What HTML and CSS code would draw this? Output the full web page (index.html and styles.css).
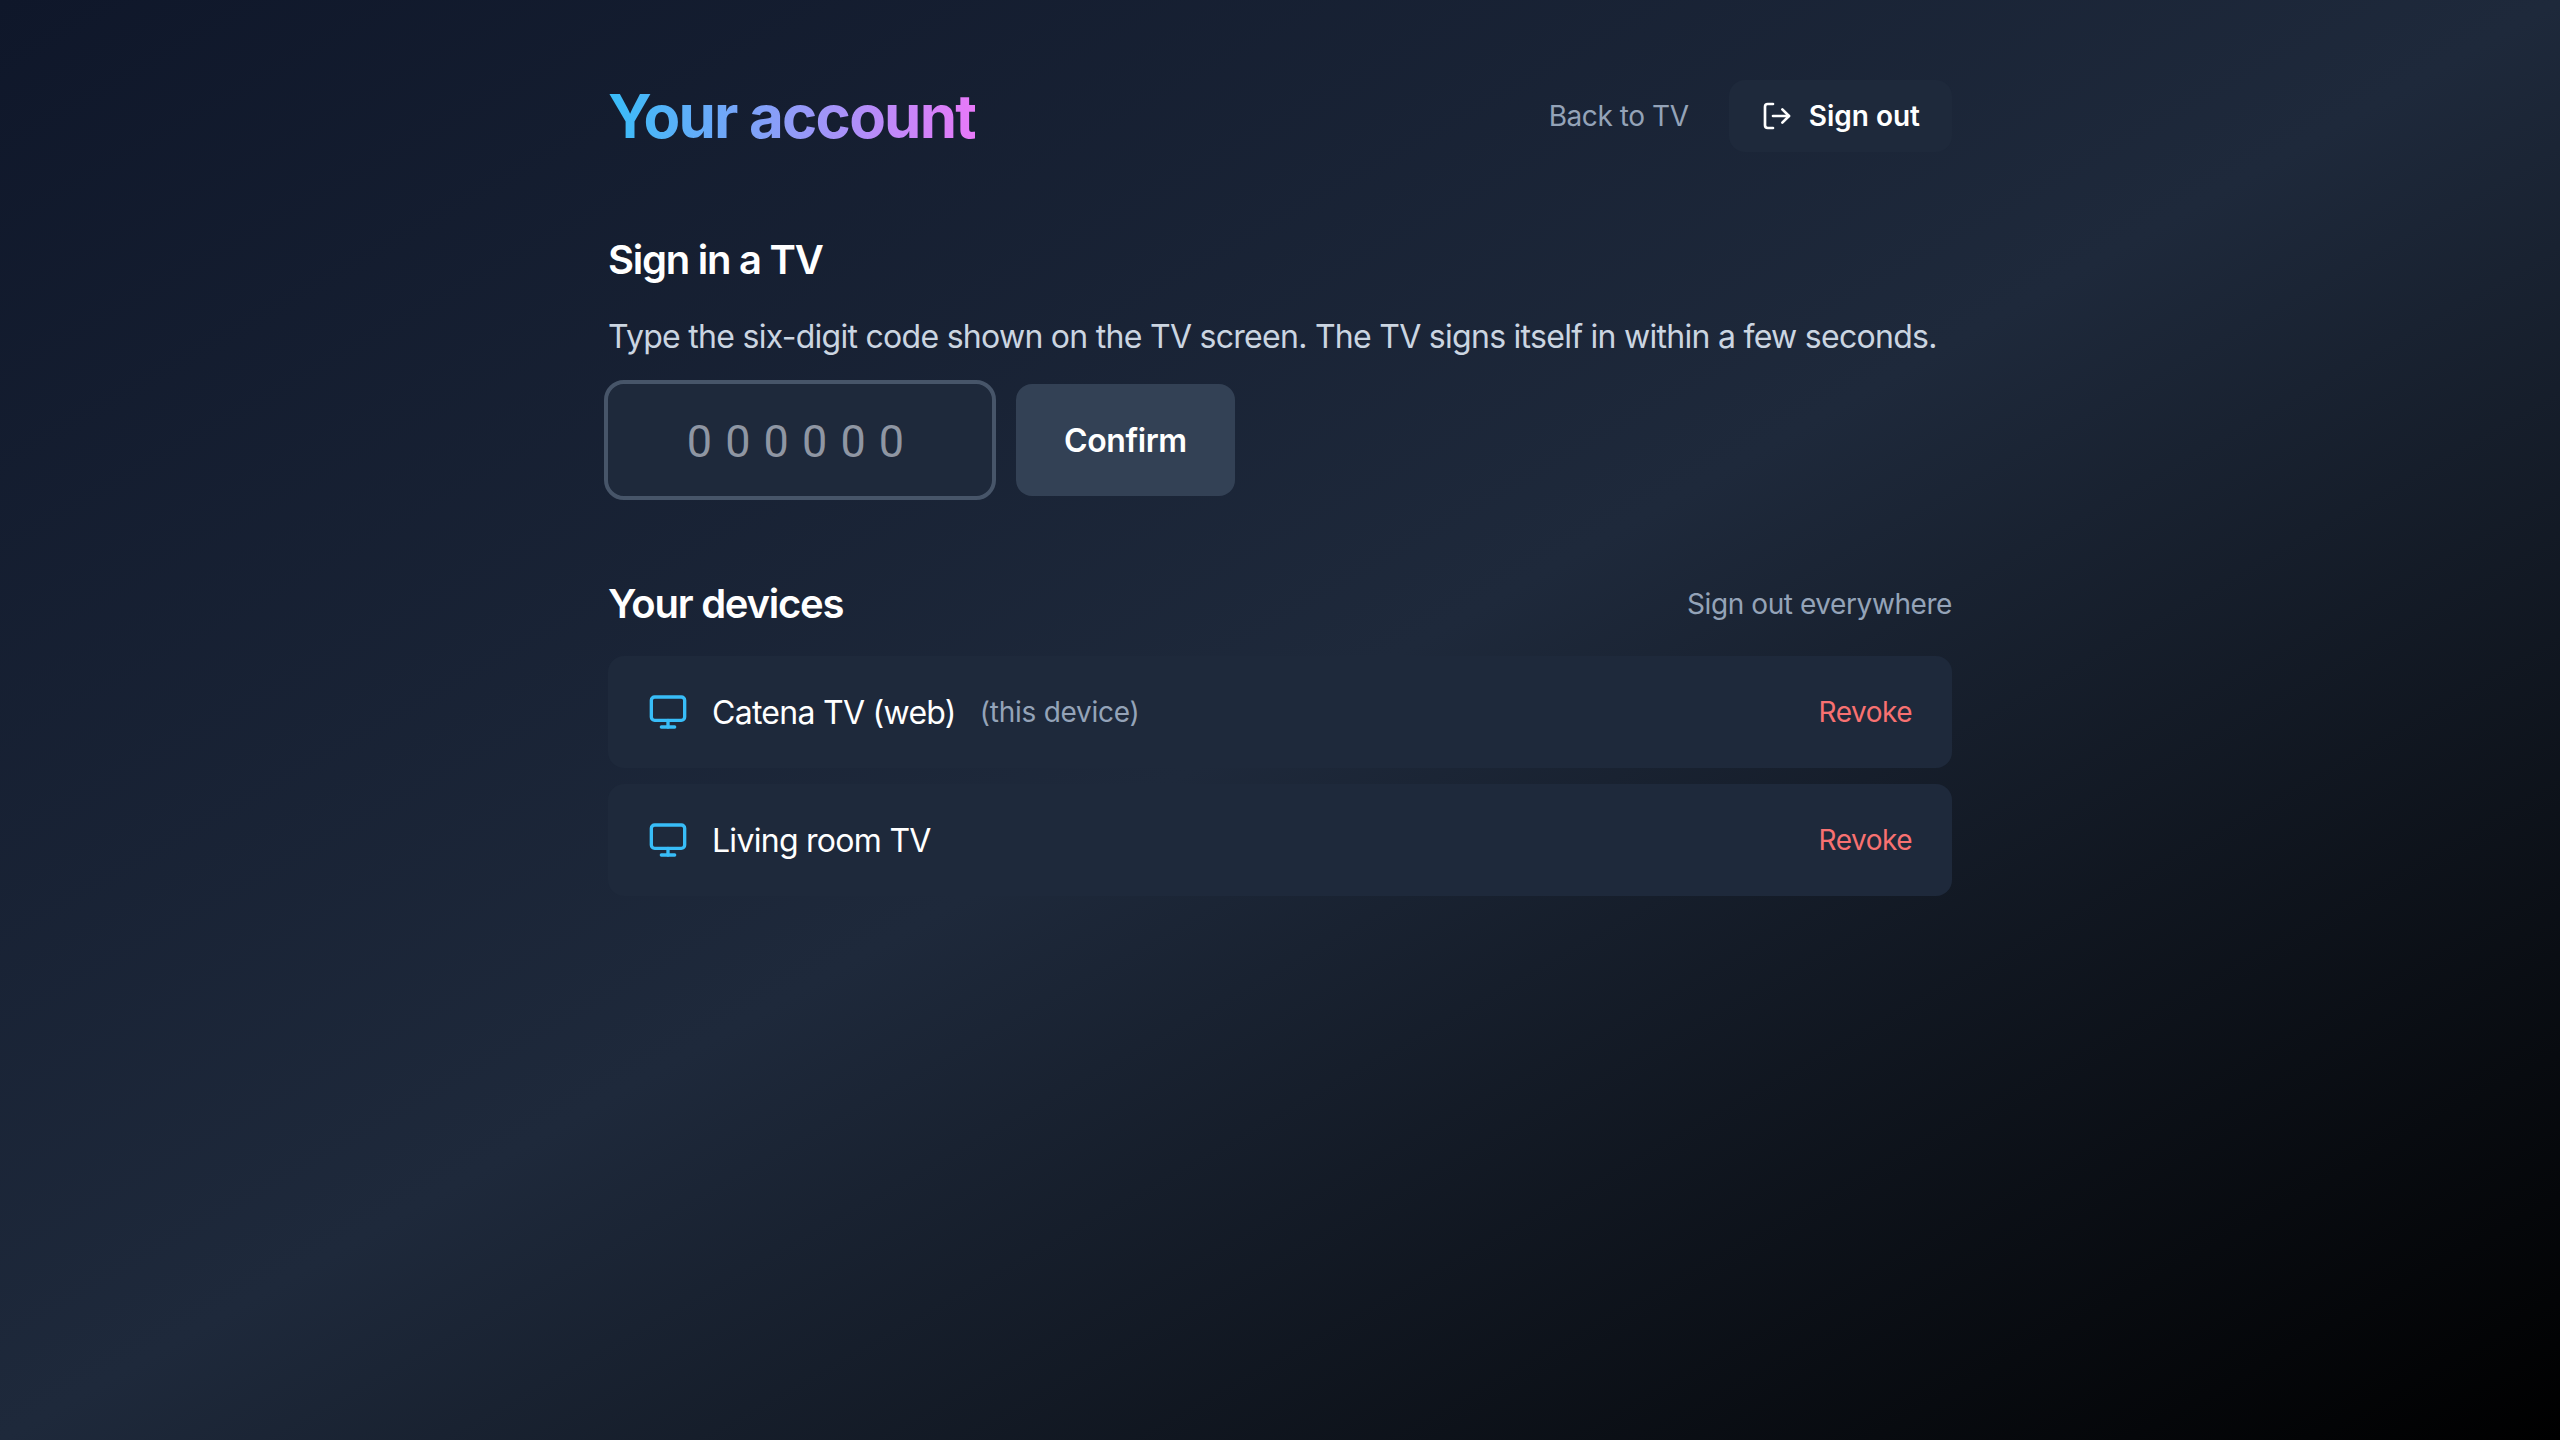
FILE: index.html
```html
<!DOCTYPE html>
<html lang="en">
<head>
<meta charset="utf-8">
<title>Your account</title>
<link rel="stylesheet" href="styles.css">
</head>
<body>
<main class="page">
  <header class="top">
    <h1 class="title">Your account</h1>
    <nav class="top-actions">
      <a class="muted-link" href="#">Back to TV</a>
      <button class="signout" type="button">
        <svg class="signout-icon" viewBox="0 0 24 24" fill="none" stroke="currentColor" stroke-width="2" stroke-linecap="round" stroke-linejoin="round"><path d="M9 21H5a2 2 0 0 1-2-2V5a2 2 0 0 1 2-2h4"/><path d="M16 17l5-5-5-5"/><path d="M21 12H9"/></svg>
        <span>Sign out</span>
      </button>
    </nav>
  </header>

  <section class="pair">
    <h2 class="heading">Sign in a TV</h2>
    <p class="lead">Type the six-digit code shown on the TV screen. The TV signs itself in within a few seconds.</p>
    <form class="code-form">
      <input class="code-input" type="text" placeholder="000000" maxlength="6">
      <button class="confirm" type="button">Confirm</button>
    </form>
  </section>

  <section class="devices">
    <div class="devices-head">
      <h2 class="heading">Your devices</h2>
      <a class="muted-link" href="#">Sign out everywhere</a>
    </div>
    <ul class="device-list">
      <li class="device">
        <div class="device-info">
          <svg class="device-icon" viewBox="0 0 24 24" fill="none" stroke="currentColor" stroke-width="2" stroke-linecap="round" stroke-linejoin="round"><rect x="2" y="3" width="20" height="14" rx="2"/><path d="M8 21h8"/><path d="M12 17v4"/></svg>
          <span class="device-name">Catena TV (web)</span>
          <span class="device-note">(this device)</span>
        </div>
        <a class="revoke" href="#">Revoke</a>
      </li>
      <li class="device">
        <div class="device-info">
          <svg class="device-icon" viewBox="0 0 24 24" fill="none" stroke="currentColor" stroke-width="2" stroke-linecap="round" stroke-linejoin="round"><rect x="2" y="3" width="20" height="14" rx="2"/><path d="M8 21h8"/><path d="M12 17v4"/></svg>
          <span class="device-name">Living room TV</span>
        </div>
        <a class="revoke" href="#">Revoke</a>
      </li>
    </ul>
  </section>
</main>
</body>
</html>
```
FILE: styles.css
```css
* { box-sizing: border-box; }
html, body { margin: 0; height: 100%; }
body {
  min-height: 1440px;
  background: linear-gradient(to bottom right, #0f172a, #1e293b, #000000);
  font-family: Inter, "Liberation Sans", sans-serif;
  color: #ffffff;
}
.page { width: 1344px; margin: 0 auto; padding-top: 80px; }
.top { display: flex; align-items: center; justify-content: space-between; height: 72px; }
.title {
  margin: 0;
  font-size: 60px;
  line-height: 72px;
  font-weight: 700;
  letter-spacing: -1.8px;
  background: linear-gradient(to right, #38bdf8, #e879f9);
  -webkit-background-clip: text;
  background-clip: text;
  color: transparent;
}
.top-actions { display: flex; align-items: center; gap: 40px; }
.muted-link { color: #94a3b8; font-size: 28px; line-height: 40px; text-decoration: none; letter-spacing: -0.42px; }
.signout {
  display: flex; align-items: center; gap: 16px;
  height: 72px; padding: 0 32px;
  border: 0; border-radius: 16px;
  background: #1e293b; color: #ffffff;
  font: 600 28px/40px Inter, "Liberation Sans", sans-serif;
}
.signout-icon { width: 32px; height: 32px; display: block; }
.pair { margin-top: 80px; }
.heading { margin: 0; font-size: 40px; line-height: 56px; font-weight: 600; color: #ffffff; letter-spacing: -1.25px; }
.lead { margin: 24px 0 0; padding-top: 1px; height: 48px; font-size: 32px; line-height: 48px; color: #cbd5e1; letter-spacing: -0.72px; white-space: nowrap; }
.code-form { display: flex; gap: 24px; margin-top: 24px; }
.code-input {
  width: 384px; height: 112px;
  padding: 2px 32px 0 36px;
  border: 0; border-radius: 16px;
  outline: 4px solid #475569;
  background: #1e293b; color: #ffffff;
  font: 400 45px Roboto, Inter, sans-serif;
  letter-spacing: 13.1px;
  text-align: center;
}
.code-input::placeholder { color: #8f96a3; opacity: 1; }
.confirm {
  height: 112px; padding: 0 48px;
  border: 0; border-radius: 16px;
  background: #334155; color: #ffffff;
  font: 600 32px Inter, "Liberation Sans", sans-serif;
  letter-spacing: -0.4px;
}
.devices { margin-top: 80px; }
.devices-head { display: flex; align-items: center; justify-content: space-between; height: 56px; }
.device-list { list-style: none; margin: 24px 0 0; padding: 0; display: flex; flex-direction: column; gap: 16px; }
.device {
  display: flex; align-items: center; justify-content: space-between;
  height: 112px; padding: 0 40px;
  border-radius: 16px; background: #1e293b;
}
.device-info { display: flex; align-items: center; }
.device-icon { width: 40px; height: 40px; color: #38bdf8; display: block; margin-right: 24px; }
.device-name { padding-top: 2px; font-size: 32px; line-height: 48px; color: #ffffff; letter-spacing: -0.72px; }
.device-note { margin-left: 24px; font-size: 28px; line-height: 40px; color: #94a3b8; letter-spacing: -0.25px; }
.revoke { font-size: 28px; line-height: 40px; color: #f87171; text-decoration: none; letter-spacing: -0.5px; }
```
